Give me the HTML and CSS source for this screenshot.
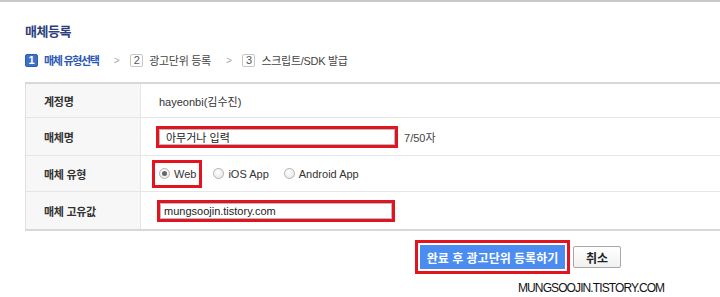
FILE: index.html
```html
<!DOCTYPE html>
<html lang="ko">
<head>
  <meta charset="UTF-8" />
  <title>매체등록</title>
  <link rel="stylesheet" href="styles.css">
</head>
<body>
  <div class="page">
    <h2 class="title">매체등록</h2>

    <ol class="steps">
      <li class="step on"><span class="num">1</span>매체 유형선택</li>
      <li class="arrow">&gt;</li>
      <li class="step"><span class="num">2</span>광고단위 등록</li>
      <li class="arrow">&gt;</li>
      <li class="step"><span class="num">3</span>스크립트/SDK 발급</li>
    </ol>

    <table class="form">
      <tr class="r1">
        <th>계정명</th>
        <td>hayeonbi(김수진)</td>
      </tr>
      <tr class="r2">
        <th>매체명</th>
        <td>
          <span class="mark wide"><input type="text" value="아무거나 입력" /></span>
          <span class="count">7/50자</span>
        </td>
      </tr>
      <tr class="r3">
        <th>매체 유형</th>
        <td>
          <div class="radios">
            <label class="mark radio-mark"><input type="radio" name="type" checked /> Web</label>
            <label><input type="radio" name="type" /> iOS App</label>
            <label><input type="radio" name="type" /> Android App</label>
          </div>
        </td>
      </tr>
      <tr class="r4">
        <th>매체 고유값</th>
        <td>
          <span class="mark url"><input type="text" value="mungsoojin.tistory.com" /></span>
        </td>
      </tr>
    </table>

    <div class="actions">
      <span class="mark btn-mark"><button class="btn-blue">완료 후 광고단위 등록하기</button></span>
      <button class="btn-cancel">취소</button>
    </div>

    <div class="watermark">MUNGSOOJIN.TISTORY.COM</div>
  </div>
</body>
</html>
```

FILE: styles.css
```css
body {
  margin: 0;
  font-family: "Liberation Sans", "Noto Sans CJK KR", sans-serif;
  font-size: 11px;
  color: #333;
  background: #fff;
  overflow: hidden;
}

.page {
  border-top: 2px solid #c9c9c9;
  padding-left: 25px;
}

.title {
  margin: 0;
  padding-top: 22px;
  height: 16px;
  line-height: 16px;
  font-size: 13px;
  font-weight: bold;
  letter-spacing: -0.5px;
  color: #2d3f7c;
}

.steps {
  list-style: none;
  margin: 0;
  padding: 0;
  margin-top: 13px;
  display: flex;
  align-items: center;
  height: 14px;
  color: #444;
  letter-spacing: -0.3px;
}

.step {
  display: flex;
  align-items: center;
}

.step .num {
  display: inline-flex;
  align-items: center;
  justify-content: center;
  width: 11px;
  height: 11px;
  margin-right: 6px;
  border: 1px solid #c6c6c6;
  border-radius: 2px;
  font-size: 11px;
  letter-spacing: 0;
  color: #555;
  background: #fff;
}

.step.on {
  color: #2a58b4;
  font-weight: bold;
  letter-spacing: -1.3px;
}

.step.on .num {
  background: #3f70c8;
  border-color: #2f5cae;
  color: #fff;
}

.arrow {
  color: #aaa;
  font-size: 10px;
  padding: 0 11px 0 15px;
}

.form {
  margin-top: 15px;
  width: 695px;
  border-collapse: collapse;
  border-top: 2px solid #d8d8d8;
  border-bottom: 2px solid #d8d8d8;
}

.form th,
.form td {
  border-top: 1px solid #e6e6e6;
  padding: 0;
  height: 33px;
  text-align: left;
}

.form th {
  width: 96px;
  padding-left: 18px;
  background: #f7f7f7;
  border-left: 1px solid #e0e0e0;
  border-right: 1px solid #e6e6e6;
  font-weight: bold;
  letter-spacing: -0.3px;
  color: #333;
}

.form td {
  padding-left: 18px;
  color: #333;
}

.form .r2 td,
.form .r2 th,
.form .r4 td,
.form .r4 th {
  height: 37px;
}

.form .r3 td,
.form .r3 th {
  height: 35px;
}

.mark {
  display: inline-block;
  border: 3px solid #e3141f;
  vertical-align: middle;
}

.mark input[type="text"] {
  display: block;
  box-sizing: border-box;
  height: 16px;
  border: 1px solid #b9b9b9;
  padding: 0 6px;
  font-family: inherit;
  font-size: 11px;
  color: #222;
  outline: none;
}

.wide {
  margin-left: -3px;
}

.wide input[type="text"] {
  width: 236px;
}

.url {
  margin-left: -2px;
}

.url input[type="text"] {
  width: 232px;
  padding-left: 3px;
}

.count {
  margin-left: 3px;
  vertical-align: middle;
  color: #444;
}

.radios {
  display: flex;
  align-items: center;
  margin-left: -7px;
}

.radios label {
  display: flex;
  align-items: center;
  margin-right: 15px;
  color: #333;
}

.radios .radio-mark {
  box-sizing: border-box;
  height: 28px;
  padding: 0 3px 0 4px;
  margin-right: 11px;
}

.radios input[type="radio"] {
  appearance: none;
  width: 11px;
  height: 11px;
  margin: 0 4px 0 0;
  border: 1px solid #b3b3b3;
  border-radius: 50%;
  background: radial-gradient(circle at 40% 35%, #fff 0, #e4e4e4 100%);
  position: relative;
}

.radios input[type="radio"]:checked::after {
  content: "";
  position: absolute;
  left: 2px;
  top: 2px;
  width: 5px;
  height: 5px;
  border-radius: 50%;
  background: #666;
}

.actions {
  display: flex;
  align-items: center;
  padding-left: 390px;
  margin-top: 9px;
}

.btn-mark {
  padding: 2px;
  border-width: 3px;
}

.btn-blue {
  display: block;
  width: 145px;
  height: 24px;
  border: none;
  background: #4b8cf1;
  color: #fff;
  font-family: inherit;
  font-size: 12px;
  font-weight: bold;
  cursor: pointer;
}

.btn-cancel {
  margin-left: 3px;
  width: 48px;
  height: 22px;
  border: 1px solid #a8a8a8;
  border-radius: 2px;
  background: linear-gradient(#fff, #f1f1f1);
  color: #222;
  font-family: inherit;
  font-size: 12px;
  font-weight: bold;
  cursor: pointer;
}

.watermark {
  margin-top: 7px;
  padding-left: 493px;
  font-size: 12px;
  letter-spacing: -0.9px;
  color: #111;
}
```
